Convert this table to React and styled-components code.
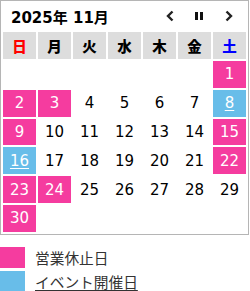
import React from "react";
import styled, { createGlobalStyle } from "styled-components";

const Global = createGlobalStyle`
  html, body { margin: 0; padding: 0; background: #fff; }
  body { font-family: "DejaVu Sans", Verdana, sans-serif; color: #000; }
`;

const Box = styled.div`
  width: 249px;
  box-sizing: border-box;
  border: 1px solid #b5b5b5;
`;

const Header = styled.div`
  display: flex;
  align-items: center;
  height: 29px;
  padding-left: 10px;
  padding-right: 12px;
`;

const Title = styled.div`
  flex: 1;
  font-family: "DejaVu Sans", "Noto Sans CJK JP", sans-serif;
  font-weight: bold;
  font-size: 15px;
  padding-top: 1px;
`;

const NavButton = styled.span`
  display: flex;
  align-items: center;
  justify-content: center;
  width: 14px;
  height: 14px;
  margin-left: ${(p) => p.$gap}px;
  color: #222;
`;

const Table = styled.table`
  width: 100%;
  table-layout: fixed;
  border-collapse: separate;
  border-spacing: 2px;
`;

const Th = styled.th`
  height: 27px;
  padding: 0;
  background: #dddddd;
  font-family: "Noto Sans CJK JP", sans-serif;
  font-weight: 900;
  font-size: 14.5px;
  color: ${(p) => p.$color || "#000"};
`;

const Td = styled.td`
  height: 26.8px;
  padding: 0;
  text-align: center;
  font-size: 15px;
  background: ${(p) => (p.$kind === "closed" ? "#f53c9f" : p.$kind === "event" ? "#68bde9" : "transparent")};
  color: ${(p) => (p.$kind ? "#fff" : "#000")};
`;

const DayLink = styled.a`
  color: inherit;
  text-decoration: underline;
  text-underline-offset: 2px;
`;

const Legend = styled.div`
  margin-top: 12px;
  display: flex;
  flex-direction: column;
  gap: 3px;
`;

const LegendRow = styled.div`
  display: flex;
  align-items: center;
  gap: 10px;
  height: 21px;
`;

const Swatch = styled.span`
  width: 25px;
  height: 21px;
  background: ${(p) => p.$color};
`;

const LegendText = styled.span`
  font-family: "Noto Sans CJK JP", sans-serif;
  font-size: 14.7px;
  color: #333;
  text-decoration: ${(p) => (p.$link ? "underline" : "none")};
  text-underline-offset: 2px;
`;

const weekdays = [
  { t: "日", c: "#ff0000" },
  { t: "月" },
  { t: "火" },
  { t: "水" },
  { t: "木" },
  { t: "金" },
  { t: "土", c: "#0000ff" },
];

const closed = new Set([1, 2, 3, 9, 15, 22, 23, 24, 30]);
const events = new Set([8, 16]);

function buildWeeks() {
  const cells = [];
  for (let i = 0; i < 6; i++) cells.push(null);
  for (let d = 1; d <= 30; d++) cells.push(d);
  while (cells.length % 7) cells.push(null);
  const weeks = [];
  for (let i = 0; i < cells.length; i += 7) weeks.push(cells.slice(i, i + 7));
  return weeks;
}

export default function App() {
  const weeks = buildWeeks();
  return (
    <>
      <Global />
      <Box>
        <Header>
          <Title>2025年 11月</Title>
          <NavButton $gap={0}>
            <svg width="10" height="12" viewBox="0 0 10 12">
              <path d="M7.5 1.5 L3 6 L7.5 10.5" fill="none" stroke="#222" strokeWidth="2.4" />
            </svg>
          </NavButton>
          <NavButton $gap={15}>
            <svg width="10" height="10" viewBox="0 0 10 10">
              <rect x="1" y="1" width="3" height="8" fill="#111" />
              <rect x="6" y="1" width="3" height="8" fill="#111" />
            </svg>
          </NavButton>
          <NavButton $gap={16}>
            <svg width="10" height="12" viewBox="0 0 10 12">
              <path d="M2.5 1.5 L7 6 L2.5 10.5" fill="none" stroke="#222" strokeWidth="2.4" />
            </svg>
          </NavButton>
        </Header>
        <Table>
          <thead>
            <tr>
              {weekdays.map((w) => (
                <Th key={w.t} $color={w.c}>{w.t}</Th>
              ))}
            </tr>
          </thead>
          <tbody>
            {weeks.map((wk, i) => (
              <tr key={i}>
                {wk.map((d, j) => {
                  const kind = d && closed.has(d) ? "closed" : d && events.has(d) ? "event" : undefined;
                  return (
                    <Td key={j} $kind={kind}>
                      {d && kind === "event" ? <DayLink>{d}</DayLink> : d}
                    </Td>
                  );
                })}
              </tr>
            ))}
          </tbody>
        </Table>
      </Box>
      <Legend>
        <LegendRow>
          <Swatch $color="#f53c9f" />
          <LegendText>営業休止日</LegendText>
        </LegendRow>
        <LegendRow>
          <Swatch $color="#68bde9" />
          <LegendText $link>イベント開催日</LegendText>
        </LegendRow>
      </Legend>
    </>
  );
}
